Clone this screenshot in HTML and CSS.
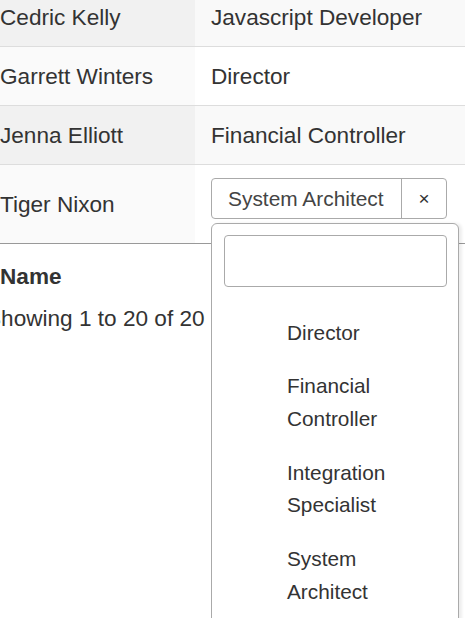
FILE: index.html
```html
<!DOCTYPE html>
<html>
<head>
<meta charset="utf-8">
<link rel="stylesheet" href="styles.css">
</head>
<body>
<div class="page">
  <div class="scroller">
    <table class="grid">
      <tbody>
        <tr class="odd">
          <td class="c-name">Cedric Kelly</td>
          <td class="c-pos">Javascript Developer</td>
        </tr>
        <tr class="even">
          <td class="c-name">Garrett Winters</td>
          <td class="c-pos">Director</td>
        </tr>
        <tr class="odd">
          <td class="c-name">Jenna Elliott</td>
          <td class="c-pos">Financial Controller</td>
        </tr>
        <tr class="even last">
          <td class="c-name">Tiger Nixon</td>
          <td class="c-pos c-edit">
            <div class="select">
              <span class="select-text">System Architect</span>
              <span class="select-clear">×</span>
            </div>
          </td>
        </tr>
      </tbody>
    </table>
    <div class="foot-name">Name</div>
    <div class="info"><span class="info-text">Showing 1 to 20 of 20 entries</span></div>
  </div>

  <div class="dropdown">
    <div class="search-wrap"><div class="search"></div></div>
    <ul class="options">
      <li class="option">Director</li>
      <li class="option">Financial Controller</li>
      <li class="option">Integration Specialist</li>
      <li class="option">System Architect</li>
    </ul>
  </div>
</div>
</body>
</html>
```

FILE: styles.css
```css
html, body {
  margin: 0;
  padding: 0;
  background: #fff;
  overflow: hidden;
}

body {
  width: 465px;
  height: 618px;
  font-family: "Liberation Sans", Arial, sans-serif;
  font-size: 22.6px;
  line-height: 33px;
  color: #333;
}

.page {
  position: relative;
  width: 465px;
  height: 618px;
  overflow: hidden;
}

.scroller {
  margin-top: -12px;
}

.grid {
  border-collapse: collapse;
  width: 465px;
  table-layout: fixed;
}

.grid td {
  height: 58px;
  padding: 0;
  vertical-align: middle;
  border-bottom: 1px solid #ddd;
  white-space: nowrap;
}

.grid .c-name {
  width: 195px;
  padding-left: 0;
}

.grid .c-pos {
  padding-left: 16px;
}

.odd .c-name { background: #f1f1f1; }
.odd .c-pos { background: #f9f9f9; }
.even .c-name { background: #fafafa; }
.even .c-pos { background: #fff; }

.grid .last td {
  height: 78px;
  border-bottom: 1px solid #999;
}

.grid .last .c-edit {
  height: 41px;
  padding: 13px 0 24px 16px;
  vertical-align: top;
}

.select {
  display: flex;
  width: 234px;
  height: 39px;
  border: 1px solid #aaa;
  border-radius: 4px;
  background: #fff;
  color: #444;
  font-size: 20.9px;
  line-height: 39px;
}

.select-text {
  flex: 1;
  padding-left: 16px;
}

.select-clear {
  width: 44px;
  border-left: 1px solid #aaa;
  text-align: center;
  font-size: 19px;
  color: #333;
}

.foot-name {
  font-weight: bold;
  padding: 16px 0 0 0;
}

.info {
  margin-top: 9px;
  overflow: hidden;
  white-space: nowrap;
}

.info-text {
  display: inline-block;
  margin-left: -14px;
}

.dropdown {
  position: absolute;
  left: 211px;
  top: 223px;
  width: 246px;
  height: 420px;
  border: 1px solid #aaa;
  border-radius: 6px;
  background: #fff;
  box-shadow: 3px 0 3px rgba(0, 0, 0, 0.07);
}

.search-wrap {
  padding: 11px 11px 12px 12px;
}

.search {
  height: 50px;
  border: 1px solid #aaa;
  border-radius: 4px;
}

.options {
  list-style: none;
  margin: 0;
  padding: 7px 20px 0 75px;
  font-size: 20.8px;
}

.option {
  padding: 10.5px 0;
  line-height: 32.7px;
  color: #333;
}
```
